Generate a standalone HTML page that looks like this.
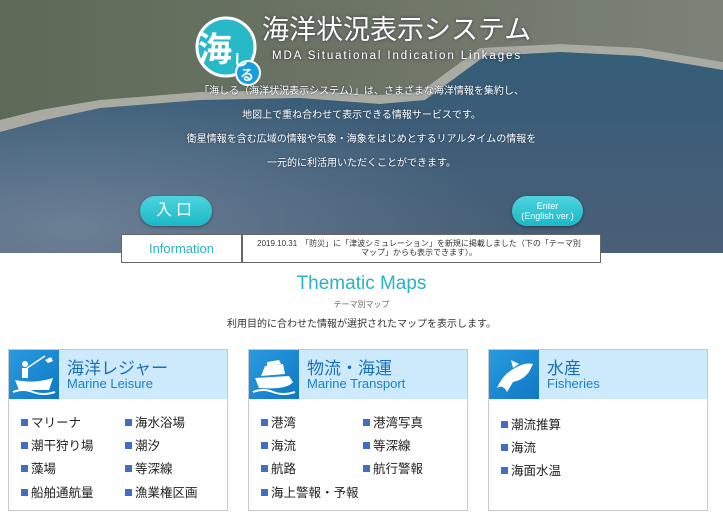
<!DOCTYPE html>
<html><head><meta charset="utf-8"><style>
*{margin:0;padding:0;box-sizing:border-box}
body{width:723px;height:517px;overflow:hidden;background:#fff;font-family:"Liberation Sans","Noto Sans CJK JP",sans-serif;position:relative}
.hero{position:absolute;left:0;top:0;width:723px;height:253px;overflow:hidden}
.abs{position:absolute}
.desc{position:absolute;left:0;width:723px;text-align:center;color:#fff;font-size:10px;text-shadow:0 0 2px #234}
.btn{position:absolute;background:linear-gradient(#4fd3df,#1ab8c6);color:#fff;text-align:center;border-radius:16px;box-shadow:0 1px 3px rgba(0,0,0,.4)}
.card{position:absolute;top:349px;width:220px;height:162px;border:1px solid #c8c8c8;background:#fff}
.ch{height:49px;background:#cdeafc;position:relative}
.ic{position:absolute;left:0;top:0;width:50px;height:49px;background:linear-gradient(135deg,#2a9be0,#0f78c4)}
.t1{position:absolute;left:58px;top:4px;font-size:17px;color:#1a6fb8}
.t2{position:absolute;left:58px;top:26px;font-size:13px;color:#1a7fc8}
.it{position:absolute;font-size:12.5px;color:#222}
.it:before{content:"";display:inline-block;width:7px;height:7px;background:#3f6ec8;margin-right:3px;vertical-align:1px}
</style></head><body>
<div class="hero">
<svg width="723" height="253" class="abs" style="left:0;top:0">
<defs>
<linearGradient id="sea" x1="0" y1="0" x2="0" y2="1"><stop offset="0" stop-color="#2f5e77"/><stop offset="0.5" stop-color="#3d5d78"/><stop offset="1" stop-color="#4a5f78"/></linearGradient>
<linearGradient id="land" x1="0" y1="0" x2="1" y2="0"><stop offset="0" stop-color="#5d6a58"/><stop offset="0.5" stop-color="#6d7566"/><stop offset="1" stop-color="#7c8278"/></linearGradient>
<radialGradient id="glint" cx="0.1" cy="0.9" r="0.6"><stop offset="0" stop-color="#8fa0b0" stop-opacity=".5"/><stop offset="1" stop-color="#8fa0b0" stop-opacity="0"/></radialGradient>
</defs>
<rect width="723" height="253" fill="url(#sea)"/>
<rect width="723" height="253" fill="url(#glint)"/>
<path d="M0 0H723V62L640 48 560 44 480 48 420 92 380 95 300 90 200 92 100 100 40 110 0 120Z" fill="url(#land)"/>
<path d="M0 120 40 110 100 100 200 92 300 90 380 95 420 92 480 48 560 44 640 48 723 62V70L640 56 560 52 485 56 425 100 380 104 300 98 200 100 100 108 45 120 0 132Z" fill="#a9aaa2"/>
</svg>
<svg class="abs" style="left:190px;top:13px" width="80" height="84">
<circle cx="36" cy="34" r="29" fill="#28b9c8" stroke="#fff" stroke-width="3"/>
<circle cx="58" cy="60" r="12" fill="#1a9ee0" stroke="#fff" stroke-width="2"/>
<text x="8" y="48" font-size="34" font-weight="bold" fill="#fff" font-family="Noto Sans CJK JP">海</text>
<text x="43" y="52" font-size="15" font-weight="bold" fill="#fff" font-family="Noto Sans CJK JP">し</text>
<text x="50" y="67" font-size="14" font-weight="bold" fill="#fff" font-family="Noto Sans CJK JP">る</text>
</svg>
<div class="abs" style="left:262px;top:8px;font-size:27px;color:#fff;text-shadow:0 0 3px #334">海洋状況表示システム</div>
<div class="abs" style="left:272px;top:50px;font-size:11.5px;color:#fff;letter-spacing:1.9px;text-shadow:0 0 3px #223">MDA Situational Indication Linkages</div>
<div class="desc" style="top:82px">「海しる（海洋状況表示システム）」は、さまざまな海洋情報を集約し、</div>
<div class="desc" style="top:106px">地図上で重ね合わせて表示できる情報サービスです。</div>
<div class="desc" style="top:130px">衛星情報を含む広域の情報や気象・海象をはじめとするリアルタイムの情報を</div>
<div class="desc" style="top:154px">一元的に利活用いただくことができます。</div>
<div class="btn" style="left:140px;top:196px;width:72px;height:30px;font-size:16px;line-height:30px;letter-spacing:4px">入口</div>
<div class="btn" style="left:512px;top:196px;width:71px;height:30px;font-size:9px;line-height:10px;padding-top:5px">Enter<br>(English ver.)</div>
</div>
<div class="abs" style="left:121px;top:234px;width:480px;height:29px;border:1px solid #666;background:#fff">
<div class="abs" style="left:0;top:0;width:121px;height:27px;border-right:2px solid #666;color:#2ab3c2;font-size:13px;text-align:center;line-height:27px">Information</div>
<div class="abs" style="left:132px;top:5px;width:330px;font-size:8px;line-height:8.5px;color:#333;text-align:center">2019.10.31　「防災」に「津波シミュレーション」を新規に掲載しました（下の「テーマ別マップ」からも表示できます）。</div>
</div>
<div class="abs" style="left:0;top:273px;width:723px;text-align:center;font-size:19px;color:#2ab3c2">Thematic Maps</div>
<div class="abs" style="left:0;top:299px;width:723px;text-align:center;font-size:8px;color:#666">テーマ別マップ</div>
<div class="abs" style="left:0;top:315px;width:723px;text-align:center;font-size:10px;color:#333">利用目的に合わせた情報が選択されたマップを表示します。</div>

<div class="card" style="left:8px"><div class="ch"><div class="ic"><svg width="50" height="49"><path d="M6 30 Q25 34 44 28 L40 40 H10Z" fill="#fff"/><path d="M4 42 Q14 38 24 42 T46 42" stroke="#fff" stroke-width="2" fill="none"/><circle cx="16" cy="14" r="3" fill="#fff"/><path d="M13 18h6v10h-6z" fill="#fff"/><path d="M18 18 L36 6" stroke="#fff" stroke-width="1.5"/><path d="M36 10 l6-3 2 4-5 2z" fill="#fff"/></svg></div><div class="t1">海洋レジャー</div><div class="t2">Marine Leisure</div></div>
<div class="it" style="left:12px;top:62px">マリーナ</div><div class="it" style="left:116px;top:62px">海水浴場</div>
<div class="it" style="left:12px;top:85px">潮干狩り場</div><div class="it" style="left:116px;top:85px">潮汐</div>
<div class="it" style="left:12px;top:108px">藻場</div><div class="it" style="left:116px;top:108px">等深線</div>
<div class="it" style="left:12px;top:132px">船舶通航量</div><div class="it" style="left:116px;top:132px">漁業権区画</div></div>

<div class="card" style="left:248px"><div class="ch"><div class="ic"><svg width="50" height="49"><path d="M6 28 L40 26 L44 32 Q38 40 10 38Z" fill="#fff"/><path d="M12 26 L16 16 L34 14 L36 24Z" fill="#fff"/><path d="M18 12 L30 10 L32 14 L18 16Z" fill="#fff"/><path d="M4 42 Q14 38 24 42 T46 42" stroke="#fff" stroke-width="2" fill="none"/></svg></div><div class="t1">物流・海運</div><div class="t2">Marine Transport</div></div>
<div class="it" style="left:12px;top:62px">港湾</div><div class="it" style="left:114px;top:62px">港湾写真</div>
<div class="it" style="left:12px;top:85px">海流</div><div class="it" style="left:114px;top:85px">等深線</div>
<div class="it" style="left:12px;top:108px">航路</div><div class="it" style="left:114px;top:108px">航行警報</div>
<div class="it" style="left:12px;top:132px">海上警報・予報</div></div>

<div class="card" style="left:488px"><div class="ch"><div class="ic"><svg width="50" height="49"><path d="M8 38 Q14 24 26 18 Q36 12 44 14 L40 22 Q34 30 24 32 L18 42 Q14 34 8 38Z" fill="#fff"/><path d="M24 18 L22 10 L30 14Z" fill="#fff"/></svg></div><div class="t1">水産</div><div class="t2">Fisheries</div></div>
<div class="it" style="left:12px;top:64px">潮流推算</div>
<div class="it" style="left:12px;top:87px">海流</div>
<div class="it" style="left:12px;top:110px">海面水温</div></div>
</body></html>
